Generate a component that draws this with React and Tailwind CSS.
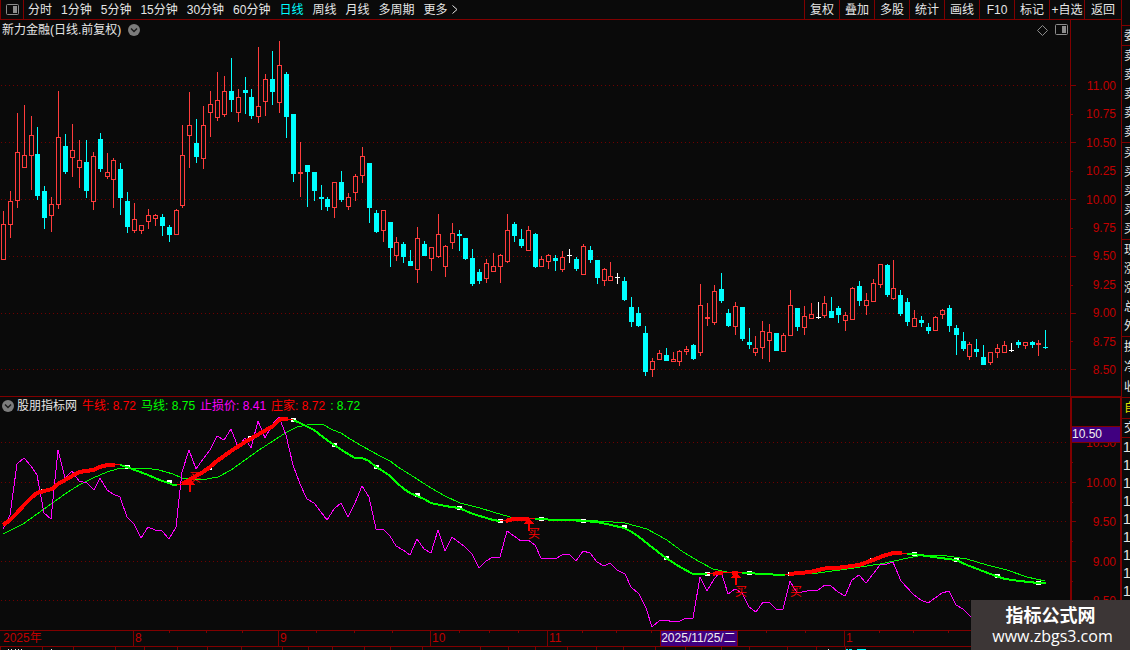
import clsx from "clsx";

const periods = [
  "分时",
  "1分钟",
  "5分钟",
  "15分钟",
  "30分钟",
  "60分钟",
  "日线",
  "周线",
  "月线",
  "多周期",
];

const tools = ["复权", "叠加", "多股", "统计", "画线", "F10", "标记", "+自选", "返回"];

const priceLabels = [
  "11.00",
  "10.75",
  "10.50",
  "10.25",
  "10.00",
  "9.75",
  "9.50",
  "9.25",
  "9.00",
  "8.75",
  "8.50",
];

// x, high, top, bottom, low, kind (1 = up, 0 = down, 2 = flat)
const candles = [
  [3, 211, 224, 260, 260, 1], [10, 191, 201, 225, 238, 1], [17, 113, 152, 201, 208, 1],
  [24, 105, 155, 168, 168, 1], [31, 116, 135, 156, 190, 1], [37, 127, 154, 196, 200, 0],
  [44, 186, 191, 218, 229, 0], [51, 197, 204, 216, 232, 1], [58, 91, 137, 205, 209, 1],
  [65, 134, 146, 172, 174, 0], [72, 124, 150, 158, 177, 1], [79, 140, 160, 168, 188, 1],
  [86, 140, 162, 191, 198, 0], [93, 152, 156, 202, 210, 1], [100, 133, 139, 169, 172, 0],
  [107, 153, 172, 177, 179, 1], [113, 158, 160, 180, 208, 1], [120, 163, 169, 198, 215, 0],
  [127, 192, 201, 227, 233, 0], [134, 203, 219, 231, 233, 1], [141, 225, 225, 231, 234, 1],
  [148, 209, 215, 222, 229, 1], [155, 214, 215, 219, 226, 1], [162, 214, 217, 226, 236, 0],
  [169, 225, 227, 235, 242, 0], [176, 209, 210, 235, 235, 1], [182, 125, 155, 206, 208, 1],
  [189, 92, 125, 136, 168, 1], [196, 119, 143, 157, 163, 0], [203, 106, 125, 159, 169, 1],
  [210, 91, 104, 113, 137, 1], [217, 72, 100, 118, 121, 1], [224, 76, 91, 115, 117, 1],
  [231, 58, 91, 100, 112, 0], [238, 89, 97, 113, 122, 1], [245, 77, 90, 93, 114, 0],
  [251, 89, 97, 116, 119, 0], [258, 47, 106, 117, 123, 1], [265, 74, 79, 102, 116, 1],
  [272, 51, 79, 92, 105, 0], [279, 41, 65, 103, 113, 1], [286, 72, 74, 117, 138, 0],
  [293, 114, 114, 174, 182, 0], [300, 142, 172, 174, 197, 1], [307, 165, 165, 172, 207, 0],
  [314, 172, 172, 191, 201, 0], [321, 185, 197, 199, 210, 0], [327, 197, 199, 207, 211, 0],
  [334, 182, 182, 208, 218, 1], [341, 171, 182, 200, 202, 0], [348, 193, 197, 207, 210, 1],
  [355, 174, 176, 193, 201, 1], [362, 147, 156, 176, 183, 1], [369, 163, 163, 208, 223, 0],
  [376, 210, 213, 232, 233, 0], [383, 210, 210, 231, 242, 1], [390, 222, 222, 248, 267, 0],
  [396, 237, 242, 256, 261, 1], [403, 242, 244, 257, 263, 0], [410, 250, 261, 266, 266, 0],
  [417, 227, 238, 270, 283, 1], [424, 241, 244, 256, 256, 0], [431, 247, 247, 259, 271, 1],
  [438, 214, 234, 257, 258, 1], [445, 245, 246, 267, 277, 1], [452, 223, 233, 243, 249, 1],
  [459, 230, 234, 236, 251, 0], [465, 238, 238, 259, 260, 0], [472, 249, 258, 284, 286, 0],
  [479, 269, 272, 281, 284, 0], [486, 259, 263, 279, 283, 1], [493, 253, 266, 272, 272, 1],
  [500, 254, 255, 267, 283, 1], [507, 214, 230, 262, 263, 1], [514, 222, 224, 236, 242, 0],
  [521, 229, 239, 246, 248, 0], [528, 226, 230, 251, 251, 1], [535, 233, 234, 267, 268, 0],
  [541, 256, 259, 267, 267, 1], [548, 254, 255, 262, 269, 1], [555, 255, 258, 261, 271, 0],
  [562, 251, 257, 270, 272, 1], [569, 249, 255, 256, 263, 2], [576, 257, 259, 269, 271, 0],
  [583, 244, 246, 275, 275, 1], [590, 246, 250, 260, 263, 0], [597, 260, 260, 278, 284, 0],
  [604, 268, 269, 281, 286, 1], [610, 262, 276, 281, 281, 1], [617, 273, 277, 278, 284, 2],
  [624, 277, 281, 300, 301, 0], [631, 297, 307, 322, 327, 0], [638, 307, 313, 326, 327, 0],
  [645, 326, 333, 372, 376, 0], [652, 358, 361, 370, 377, 1], [659, 350, 353, 360, 360, 1],
  [666, 348, 355, 361, 361, 0], [673, 352, 359, 362, 362, 1], [679, 350, 351, 362, 366, 1],
  [686, 346, 349, 352, 355, 1], [693, 344, 345, 359, 360, 0], [700, 284, 305, 353, 356, 1],
  [707, 303, 317, 319, 326, 1], [714, 285, 291, 323, 325, 1], [721, 273, 289, 301, 303, 0],
  [728, 309, 313, 326, 327, 0], [735, 302, 306, 327, 335, 1], [742, 307, 307, 339, 341, 0],
  [749, 328, 342, 345, 349, 0], [755, 336, 348, 353, 356, 1], [762, 321, 331, 348, 359, 1],
  [769, 324, 332, 341, 362, 1], [776, 333, 333, 351, 351, 0], [783, 333, 335, 352, 352, 1],
  [790, 290, 305, 336, 336, 1], [797, 308, 308, 327, 331, 0], [804, 306, 316, 328, 335, 1],
  [811, 303, 314, 319, 319, 1], [818, 302, 317, 318, 319, 2], [824, 296, 303, 316, 318, 1],
  [831, 297, 311, 318, 318, 0], [838, 306, 308, 315, 323, 0], [845, 312, 315, 321, 331, 1],
  [852, 287, 288, 320, 320, 1], [859, 281, 286, 301, 306, 0], [866, 293, 300, 306, 315, 1],
  [873, 279, 283, 302, 302, 1], [880, 264, 264, 285, 288, 1], [887, 264, 265, 295, 297, 0],
  [893, 260, 288, 299, 300, 1], [900, 290, 295, 314, 316, 0], [907, 298, 302, 322, 326, 0],
  [914, 310, 318, 327, 327, 1], [921, 316, 320, 323, 327, 0], [928, 323, 327, 331, 334, 0],
  [935, 316, 317, 331, 331, 1], [942, 309, 310, 315, 319, 1], [949, 305, 308, 326, 332, 0],
  [956, 325, 328, 335, 355, 0], [963, 332, 341, 349, 351, 0], [969, 342, 344, 357, 360, 1],
  [976, 339, 349, 352, 357, 0], [983, 345, 357, 365, 365, 0], [990, 352, 352, 363, 365, 1],
  [997, 344, 348, 353, 358, 1], [1004, 341, 345, 353, 353, 1], [1011, 343, 350, 351, 352, 2],
  [1018, 340, 342, 345, 348, 0], [1025, 342, 342, 346, 349, 1], [1032, 341, 342, 345, 348, 0],
  [1038, 340, 343, 345, 356, 1], [1045, 330, 347, 348, 349, 0],
];

const stopLine =
  "3,529 10,515 17,464 24,458 31,466 37,475 44,513 51,519 58,450 65,478 72,471 79,481 87,483 94,490 100,478 107,490 113,494 120,497 127,517 134,524 141,538 148,527 155,530 162,531 169,539 176,527 182,472 189,450 196,469 203,459 210,450 217,436 224,440 231,429 238,447 245,438 251,448 258,421 265,438 272,425 279,417 286,435 293,465 300,484 307,499 314,503 321,512 327,520 334,509 341,503 348,517 355,503 362,486 369,497 376,529 383,529 390,536 396,546 403,550 410,555 417,539 424,549 431,553 438,530 445,551 452,537 465,547 472,554 479,568 486,561 493,557 500,557 507,531 521,541 528,540 535,545 541,558 555,559 562,555 569,554 576,561 583,551 590,553 597,562 604,566 610,563 617,570 625,574 631,587 639,594 646,608 652,627 659,621 666,620 673,622 680,621 686,618 693,618 700,577 707,591 714,579 721,571 728,594 735,589 742,593 749,607 756,612 763,602 770,603 777,610 783,609 790,581 797,593 807,591 818,590 825,585 831,586 838,592 845,596 852,580 859,575 866,583 880,565 887,564 893,562 901,581 914,595 921,600 928,603 942,593 949,591 956,605 963,609 970,616 977,618";

const horseLine =
  "3,534 23,524 37,514 51,504 65,494 79,485 93,478 107,472 117,469 127,468 144,468 159,470 173,474 182,478 193,480 207,479 218,477 231,470 245,460 259,450 273,441 287,432 297,427 307,425 322,424 333,430 341,433 350,439 362,446 380,456 390,461 398,467 417,479 431,488 445,496 460,503 480,508 493,512 510,517 523,518 547,519 583,520 613,522 625,523 647,529 667,540 683,552 700,562 713,569 727,572 747,573 760,574 785,575 818,573 847,569 880,564 908,558 923,555 947,556 967,559 987,565 1007,570 1027,577 1045,581";

const bullUp = [
  "3,525 10,520 17,513 24,505 31,498 37,493 44,491 52,489 58,484 72,476 79,472 93,470 100,467 107,465 115,465",
  "182,484 189,480 196,476 203,472 210,467 217,461 224,456 231,451 245,442 259,434 273,426 279,420 282,419 288,419",
  "506,521 513,519 529,519",
  "713,574 717,573 723,573",
  "732,573 738,573",
  "789,574 810,572 827,568 837,568 859,565 873,560 883,556 893,553 902,553",
];

const bullDown = [
  "120,465 127,467 148,475 162,481 169,483 173,485 177,485",
  "293,420 300,423 314,430 327,440 334,445 348,454 355,458 362,458 369,461 376,467 383,471 390,476 397,483 404,489 410,493 417,496 424,499 431,503 445,506 459,508 473,514 480,516 493,520 500,521",
  "535,519 541,519 555,520 569,520 583,521 597,522 611,525 624,528 632,532 639,537 653,548 666,558 680,567 693,574 707,574",
  "742,573 749,573 760,574 785,575",
  "907,554 914,554 933,557 956,560 967,565 980,570 993,575 1005,579 1020,581 1038,583 1046,583",
];

// short thin joins where the bull line changes direction
const bullJoins = ["115,464 120,464", "177,485 182,484", "288,419 293,420", "500,521 506,520", "529,518 535,519", "707,574 713,573", "723,572 742,573", "785,575 789,574", "902,553 907,553"];

const markers = [
  [43, 491], [85, 471], [127, 467], [169, 482], [209, 468], [250, 438], [293, 420],
  [334, 445], [376, 467], [417, 495], [459, 508], [500, 521], [541, 519], [583, 521],
  [624, 527], [666, 558], [707, 574], [749, 573], [790, 574], [872, 560], [914, 554],
  [956, 560], [997, 576], [1038, 583],
];

const quoteRows = [
  { text: "", style: "h-[26px]" },
  { text: "委", style: "h-5" },
  { text: "卖卖卖卖卖", style: "h-[97px]" },
  { text: "买买买买买", style: "h-[97px]" },
  { text: "现涨涨总外", style: "h-[97px]" },
  { text: "换净收", style: "h-[61px]" },
  { text: "自", style: "h-[21px] text-[#e0e000]" },
  { text: "交", style: "h-[19px]" },
];

const PanelIcon = () => (
  <svg className="h-3 w-[13px] shrink-0" viewBox="0 0 13 12" fill="none">
    <rect x="0.5" y="0.5" width="12" height="10" rx="1" stroke="#8c8c8c" />
    <rect x="7" y="2" width="4" height="7" fill="#8c8c8c" />
  </svg>
);

const DropIcon = () => (
  <svg className="h-3 w-3 shrink-0" viewBox="0 0 12 12">
    <circle cx="6" cy="6" r="6" fill="#7c7c7c" />
    <path d="M3 4.5L6 7.5L9 4.5" fill="none" stroke="#1a1a1a" strokeWidth="1.4" />
  </svg>
);

function GridLines({ rows }) {
  return rows.map((y) => (
    <line key={y} x1="1" x2="1067" y1={y + 0.5} y2={y + 0.5} stroke="#700000" strokeDasharray="1 3" />
  ));
}

function Candle({ data }) {
  const [x, high, top, bottom, low, kind] = data;
  const color = kind === 1 ? "#ff3c3c" : kind === 0 ? "#00ffff" : "#ffffff";
  return (
    <g>
      <rect x={x} y={high} width="1" height={low - high} fill={color} />
      {kind === 1 ? (
        <rect
          x={x - 1.5}
          y={top + 0.5}
          width="4"
          height={bottom - top - 1}
          fill="#0a0a0a"
          stroke={color}
        />
      ) : (
        <rect x={x - 2} y={top} width="5" height={bottom - top} fill={color} />
      )}
    </g>
  );
}

function BuyArrow({ x, y }) {
  return (
    <path d={`M${x} ${y}L${x + 5} ${y + 6}H${x + 1}V${y + 13}H${x - 1}V${y + 6}H${x - 5}Z`} fill="#ff0000" />
  );
}

function TopBar() {
  return (
    <header className="flex h-5 items-stretch border-b border-[#800000] leading-[18px]">
      <button type="button" aria-label="侧栏" className="flex w-6 items-center justify-center border-x border-[#800000]">
        <PanelIcon />
      </button>
      <nav className="ml-1 flex flex-1 gap-[9px] whitespace-nowrap">
        {periods.map((name) => (
          <button key={name} type="button" className={clsx(name === "日线" && "text-[#00ffff]")}>
            {name}
          </button>
        ))}
        <button type="button" className="flex items-center gap-1">
          更多
          <svg className="h-[9px] w-[6px]" viewBox="0 0 6 9" fill="none" stroke="#e6e6e6">
            <path d="M0.5 0.5L5 4.5L0.5 8.5" />
          </svg>
        </button>
      </nav>
      <div className="flex whitespace-nowrap">
        {tools.map((name) => (
          <button key={name} type="button" className="w-[35px] border-l border-[#800000] text-center last:w-[37px]">
            {name}
          </button>
        ))}
      </div>
    </header>
  );
}

function PricePanel() {
  return (
    <section className="flex h-[377px] border-b border-[#800000]">
      <div className="relative min-w-0 flex-1">
        <svg
          className="block h-[376px] w-full"
          viewBox="0 20 1070 376"
          preserveAspectRatio="none"
          shapeRendering="crispEdges"
        >
          <GridLines rows={[85, 142, 199, 256, 313, 369]} />
          {candles.map((c) => (
            <Candle key={c[0]} data={c} />
          ))}
        </svg>
        <div className="absolute inset-x-0 top-0 flex h-5 items-center pr-[2px] pl-[2px]">
          <h1 className="mr-[7px]">新力金融(日线.前复权)</h1>
          <button type="button" aria-label="展开">
            <DropIcon />
          </button>
          <div className="ml-auto flex items-center gap-[7px]">
            <svg className="h-[11px] w-[11px]" viewBox="0 0 11 11" fill="none" stroke="#8c8c8c">
              <path d="M5.5 0.5L10.5 5.5L5.5 10.5L0.5 5.5Z" />
            </svg>
            <PanelIcon />
          </div>
        </div>
      </div>
      <div className="flex w-[51px] border-l border-[#800000] text-[#c00000]">
        <svg className="h-[376px] w-[5px] shrink-0" viewBox="0 20 5 376" shapeRendering="crispEdges">
          {[85, 142, 199, 256, 313, 369].map((y) => (
            <rect key={y} y={y} width="5" height="1" fill="#800000" />
          ))}
          {[114, 171, 228, 285, 341].map((y) => (
            <rect key={y} y={y} width="2" height="1" fill="#800000" />
          ))}
        </svg>
        <div className="mt-[60px] flex h-[296px] flex-1 flex-col justify-between pr-[5px] text-right leading-3">
          {priceLabels.map((p) => (
            <span key={p}>{p}</span>
          ))}
        </div>
      </div>
    </section>
  );
}

function IndicatorPanel() {
  return (
    <section className="flex h-[233px]">
      <div className="relative min-w-0 flex-1">
        <svg className="block h-[233px] w-full" viewBox="0 397 1070 233" preserveAspectRatio="none" fill="none">
          <g shapeRendering="crispEdges">
            <GridLines rows={[442, 482, 521, 561, 600]} />
            <polyline points={horseLine} stroke="#00ff00" />
            <polyline points={stopLine} stroke="#ff00ff" />
            {markers.map(([x, y]) => (
              <rect key={x} x={x - 2} y={y - 2} width="5" height="4" fill="#ffffff" />
            ))}
            {bullJoins.map((p) => (
              <polyline key={p} points={p} stroke="#ff0000" />
            ))}
            {bullDown.map((p) => (
              <polyline key={p} points={p} stroke="#00ff00" strokeWidth="2" />
            ))}
            {bullUp.map((p) => (
              <polyline key={p} points={p} stroke="#ff0000" strokeWidth="4" />
            ))}
            <BuyArrow x={190} y={479} />
            <BuyArrow x={529} y={518} />
            <BuyArrow x={736} y={572} />
          </g>
          <g fill="#ff0000" fontSize="12">
            <text x="189" y="482">买</text>
            <text x="528" y="538">买</text>
            <text x="735" y="596">买</text>
            <text x="790" y="596">买</text>
          </g>
        </svg>
        <div className="absolute inset-x-0 top-0 flex h-[17px] items-center gap-[5px] pl-[2px] whitespace-nowrap">
          <button type="button" className="flex items-center gap-[3px]">
            <DropIcon />
            股朋指标网
          </button>
          <span className="text-[#ff0000]">牛线: 8.72</span>
          <span className="text-[#00ff00]">马线: 8.75</span>
          <span className="text-[#ff00ff]">止损价: 8.41</span>
          <span className="text-[#ff0000]">庄家: 8.72</span>
          <span className="text-[#00ff00]">: 8.72</span>
        </div>
      </div>
      <div className="relative flex w-[51px] border-t border-r border-l-2 border-[#800000] text-[#c00000]">
        <svg className="h-[232px] w-1 shrink-0" viewBox="0 398 4 232" shapeRendering="crispEdges">
          {[442, 482, 521, 561, 600].map((y) => (
            <rect key={y} y={y} width="4" height="1" fill="#800000" />
          ))}
          {[462, 502, 541, 581].map((y) => (
            <rect key={y} y={y} width="1" height="1" fill="#800000" />
          ))}
        </svg>
        <div className="mt-[39px] flex h-[170px] flex-1 flex-col justify-between pr-1 text-right leading-3">
          <span>10.50</span>
          <span>10.00</span>
          <span>9.50</span>
          <span>9.00</span>
          <span>8.50</span>
        </div>
        <div className="absolute inset-x-0 top-7 h-[17px] border-y border-[#800000] bg-[#400080] leading-[15px] text-[#f0f0f0]">
          10.50
        </div>
      </div>
    </section>
  );
}

function TimeAxis() {
  return (
    <div className="flex h-[17px] border-y border-[#800000] text-[#c00000]">
      <div className="relative grid flex-1 grid-cols-[133fr_145fr_152fr_117fr_297fr_226fr] leading-[15px]">
        <span className="pl-[3px]">2025年</span>
        <span className="border-l border-[#800000] pl-px">8</span>
        <span className="border-l border-[#800000] pl-px">9</span>
        <span className="border-l border-[#800000] pl-px">10</span>
        <span className="border-l border-[#800000] pl-px">11</span>
        <span className="border-l border-[#800000] pl-px">1</span>
        <svg
          className="absolute inset-x-0 top-0 h-[2px] w-full"
          viewBox="0 0 1070 2"
          preserveAspectRatio="none"
          shapeRendering="crispEdges"
        >
          {[169, 206, 242, 316, 354, 392, 459, 489, 518, 582, 616, 651, 766, 805, 879, 913, 948].map((x) => (
            <rect key={x} x={x} width="1" height="2" fill="#800000" />
          ))}
        </svg>
        <div className="absolute top-0 left-[61.7%] h-[15px] border-x border-[#800000] bg-[#400080] pr-px whitespace-nowrap text-[#f0f0f0]">
          2025/11/25/二
        </div>
      </div>
      <div className="w-[51px]" />
    </div>
  );
}

// top edge of the tab row, cut off by the window
function TabEdge() {
  return (
    <svg className="block h-[3px] w-full" viewBox="0 0 1121 3" preserveAspectRatio="none" shapeRendering="crispEdges">
      {[
        0, 42, 73, 115, 144, 177, 207, 241, 282, 308, 332, 364, 390, 422, 480, 508, 535, 567, 596, 623, 655, 685, 721,
        749, 787, 816, 845,
      ].map((x) => (
        <rect key={x} x={x} width="1" height="3" fill="#800000" />
      ))}
      {[8, 11, 15, 18, 21, 51, 828].map((x) => (
        <rect key={x} x={x} y="2" width="1" height="1" fill="#e6e6e6" />
      ))}
      <path d="M846 2h2v1h-2zM849 2h3v1h-3zM857 2h9v1h-9z" fill="#00ffff" />
    </svg>
  );
}

function QuoteStrip() {
  return (
    <aside className="w-[9px] shrink-0 overflow-hidden border-l border-[#800000]">
      {quoteRows.map((row, i) => (
        <div
          key={i}
          className={clsx("flex flex-col justify-around border-b border-[#800000] pl-[2px] leading-[18px]", row.style)}
        >
          {row.text.split("").map((ch, j) => (
            <span key={j}>{ch}</span>
          ))}
        </div>
      ))}
      <div className="flex flex-col pl-px text-[14px] leading-[18px]">
        {[1, 2, 3, 4, 5, 6, 7, 8, 9].map((n) => (
          <span key={n}>1</span>
        ))}
      </div>
    </aside>
  );
}

export default function App() {
  return (
    <div className="relative flex h-screen overflow-hidden bg-[#0a0a0a] font-['Liberation_Sans','Noto_Sans_CJK_SC',sans-serif] text-[12px] text-[#e6e6e6]">
      <main className="min-w-0 flex-1">
        <TopBar />
        <PricePanel />
        <IndicatorPanel />
        <TimeAxis />
        <TabEdge />
      </main>
      <QuoteStrip />
      <div className="absolute right-0 bottom-0 flex h-[50px] w-[159px] flex-col items-center bg-[#3c3636] pt-[5px] text-white">
        <strong className="text-[18px] leading-[22px]">指标公式网</strong>
        <a href="#" className="pl-1 font-['Open_Sans','Noto_Sans',sans-serif] text-[16px] leading-[18px]">
          www.zbgs3.com
        </a>
      </div>
    </div>
  );
}
